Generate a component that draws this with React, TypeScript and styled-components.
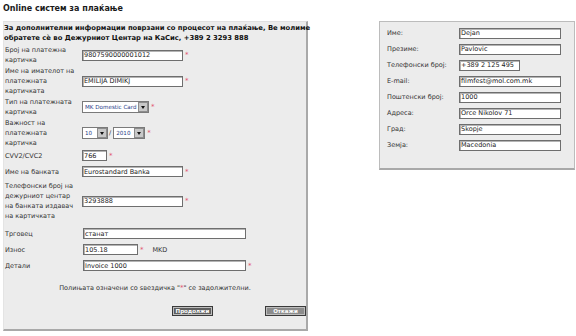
import React from 'react'
import styled, { createGlobalStyle } from 'styled-components'

const GlobalStyle = createGlobalStyle`
  body {
    margin: 0;
    background: #ffffff;
    font-family: 'DejaVu Sans', Verdana, sans-serif;
    font-size: 6.5px;
    color: #222222;
  }
`

const Page = styled.div`
  padding: 3px 0 0 3px;
  width: 573px;
  height: 333px;
  overflow: hidden;
`

const Title = styled.h1`
  margin: 0;
  font-size: 8px;
  font-weight: bold;
  line-height: 11px;
  height: 18px;
  color: #1a1a1a;
`

const Columns = styled.div`
  display: flex;
  align-items: flex-start;
  gap: 71px;
`

const LeftPanel = styled.section`
  box-sizing: border-box;
  width: 305px;
  height: 310px;
  background: #ececec;
  border-top: 1px solid #e0e0e0;
  border-left: 1px solid #e4e4e4;
  border-right: 2px solid #a9a9a9;
  border-bottom: 2px solid #a9a9a9;
  padding: 1px 0 0 0;
  display: flex;
  flex-direction: column;
`

const Intro = styled.p`
  margin: 0;
  font-size: 6.8px;
  font-weight: bold;
  line-height: 10px;
  color: #111;
  white-space: nowrap;
`

const FieldList = styled.div<{ $top: number }>`
  display: flex;
  flex-direction: column;
  gap: 1px;
  margin-top: ${(p) => p.$top}px;
`

const FieldRow = styled.div<{ $min?: number }>`
  display: flex;
  align-items: center;
  min-height: ${(p) => p.$min ?? 14}px;
`

const Label = styled.div<{ $width?: number }>`
  width: ${(p) => p.$width ?? 77}px;
  flex: none;
  padding-left: 1px;
  line-height: 10px;
  color: #333;
`

const Control = styled.div`
  display: flex;
  align-items: center;
`

const TextBox = styled.input<{ $w: number }>`
  box-sizing: border-box;
  width: ${(p) => p.$w}px;
  height: 11px;
  margin: 0;
  padding: 0 1px;
  border: 1px solid #6e6e6e;
  box-shadow: inset 1px 1px 0 #b4b4b4;
  background: #ffffff;
  font-family: 'DejaVu Sans', Verdana, sans-serif;
  font-size: 6.5px;
  color: #222;
  outline: none;
`

const Star = styled.span`
  color: #e2546c;
  font-size: 7px;
  margin-left: 2px;
  line-height: 8px;
`

const Unit = styled.span`
  margin-left: 9px;
  color: #333;
`

const FakeSelect = styled.div<{ $w: number }>`
  box-sizing: border-box;
  width: ${(p) => p.$w}px;
  height: 12px;
  display: flex;
  align-items: center;
  justify-content: space-between;
  border: 1px solid #7a7a7a;
  background: #ffffff;
  padding-left: 2px;
  color: #1f3c88;
  font-size: 5.6px;
  white-space: nowrap;
  overflow: hidden;
`

const SelectArrow = styled.span`
  box-sizing: border-box;
  flex: none;
  width: 10px;
  height: 10px;
  background: #c8c8c8;
  border: 1px solid #8c8c8c;
  display: flex;
  align-items: center;
  justify-content: center;

  &::after {
    content: '';
    border-left: 2.5px solid transparent;
    border-right: 2.5px solid transparent;
    border-top: 3px solid #111;
  }
`

const Slash = styled.span`
  margin: 0 2px 0 1px;
  color: #333;
`

const Note = styled.p`
  margin: 10px 0 0 0;
  text-align: center;
  line-height: 10px;
  color: #333;
`

const Buttons = styled.div`
  display: flex;
  justify-content: flex-end;
  gap: 52px;
  margin-top: 13px;
`

const Button = styled.button<{ $dark?: boolean }>`
  box-sizing: border-box;
  width: 41px;
  height: 10px;
  padding: 0;
  margin: 0;
  border: 1px solid #3a3a3a;
  outline: 1px solid #bdbdbd;
  outline-offset: -2px;
  background: ${(p) => (p.$dark ? '#5f5f5f' : '#8c8c8c')};
  color: #ffffff;
  font-family: 'DejaVu Sans', Verdana, sans-serif;
  font-size: 5.5px;
  font-weight: bold;
  line-height: 8px;
`

const RightPanel = styled.section`
  box-sizing: border-box;
  width: 196px;
  height: 149px;
  background: #ececec;
  border: 1px solid #bcbcbc;
  border-bottom: 2px solid #a9a9a9;
  padding: 3px 0 0 6px;
  display: flex;
  flex-direction: column;
`

const InfoRow = styled.div`
  display: flex;
  align-items: center;
  height: 16px;
`

const cardFields: {
  label: string[]
  kind: 'text' | 'select' | 'expiry'
  value?: string
  w?: number
  min?: number
}[] = [
  { label: ['Број на платежна', 'картичка'], kind: 'text', value: '9807590000001012', w: 101 },
  { label: ['Име на имателот на', 'платежната', 'картичката'], kind: 'text', value: 'EMILIJA DIMIKJ', w: 101 },
  { label: ['Тип на платежната', 'картичка'], kind: 'select', value: 'MK Domestic Card', w: 67 },
  { label: ['Важност на', 'платежната', 'картичка'], kind: 'expiry' },
  { label: ['CVV2/CVC2'], kind: 'text', value: '766', w: 25, min: 13 },
  { label: ['Име на банката'], kind: 'text', value: 'Eurostandard Banka', w: 101, min: 17 },
  {
    label: ['Телефонски број на', 'дежурниот центар', 'на банката издавач', 'на картичката'],
    kind: 'text',
    value: '3293888',
    w: 101,
  },
]

const customer = [
  { label: 'Име:', value: 'Dejan', w: 102 },
  { label: 'Презиме:', value: 'Pavlovic', w: 102 },
  { label: 'Телефонски број:', value: '+389 2 125 495', w: 61 },
  { label: 'E-mail:', value: 'filmfest@mol.com.mk', w: 102 },
  { label: 'Поштенски број:', value: '1000', w: 102 },
  { label: 'Адреса:', value: 'Orce Nikolov 71', w: 102 },
  { label: 'Град:', value: 'Skopje', w: 102 },
  { label: 'Земја:', value: 'Macedonia', w: 102 },
]

const Lines = ({ lines }: { lines: string[] }) => (
  <>
    {lines.map((l, i) => (
      <React.Fragment key={i}>
        {i > 0 && <br />}
        {l}
      </React.Fragment>
    ))}
  </>
)

export default function App() {
  return (
    <Page>
      <GlobalStyle />
      <Title>Online систем за плаќање</Title>
      <Columns>
        <LeftPanel>
          <Intro>
            За дополнителни информации поврзани со процесот на плаќање, Ве молиме
            <br />
            обратете сѐ во Дежурниот Центар на КаСис, +389 2 3293 888
          </Intro>

          <FieldList $top={2}>
            {cardFields.map((f, i) => (
              <FieldRow key={i} $min={f.min}>
                <Label>
                  <Lines lines={f.label} />
                </Label>
                <Control>
                  {f.kind === 'text' && <TextBox $w={f.w!} value={f.value} readOnly />}
                  {f.kind === 'select' && (
                    <FakeSelect $w={f.w!}>
                      {f.value}
                      <SelectArrow />
                    </FakeSelect>
                  )}
                  {f.kind === 'expiry' && (
                    <>
                      <FakeSelect $w={26}>
                        10
                        <SelectArrow />
                      </FakeSelect>
                      <Slash>/</Slash>
                      <FakeSelect $w={32}>
                        2010
                        <SelectArrow />
                      </FakeSelect>
                    </>
                  )}
                  <Star>*</Star>
                </Control>
              </FieldRow>
            ))}
          </FieldList>

          <FieldList $top={5}>
            <FieldRow $min={15}>
              <Label $width={78}>Трговец</Label>
              <TextBox $w={163} value="станат" readOnly />
            </FieldRow>
            <FieldRow $min={15}>
              <Label $width={78}>Износ</Label>
              <Control>
                <TextBox $w={55} value="105.18" readOnly />
                <Star>*</Star>
                <Unit>MKD</Unit>
              </Control>
            </FieldRow>
            <FieldRow $min={15}>
              <Label $width={78}>Детали</Label>
              <Control>
                <TextBox $w={163} value="Invoice 1000" readOnly />
                <Star>*</Star>
              </Control>
            </FieldRow>
          </FieldList>

          <Note>
            Полињата означени со ѕвездичка "<Star style={{ marginLeft: 0 }}>*</Star>" се задолжителни.
          </Note>

          <Buttons>
            <Button $dark>Продолжи</Button>
            <Button>Откажи</Button>
          </Buttons>
        </LeftPanel>

        <RightPanel>
          {customer.map((c) => (
            <InfoRow key={c.label}>
              <Label $width={72}>{c.label}</Label>
              <TextBox $w={c.w} value={c.value} readOnly />
            </InfoRow>
          ))}
        </RightPanel>
      </Columns>
    </Page>
  )
}
